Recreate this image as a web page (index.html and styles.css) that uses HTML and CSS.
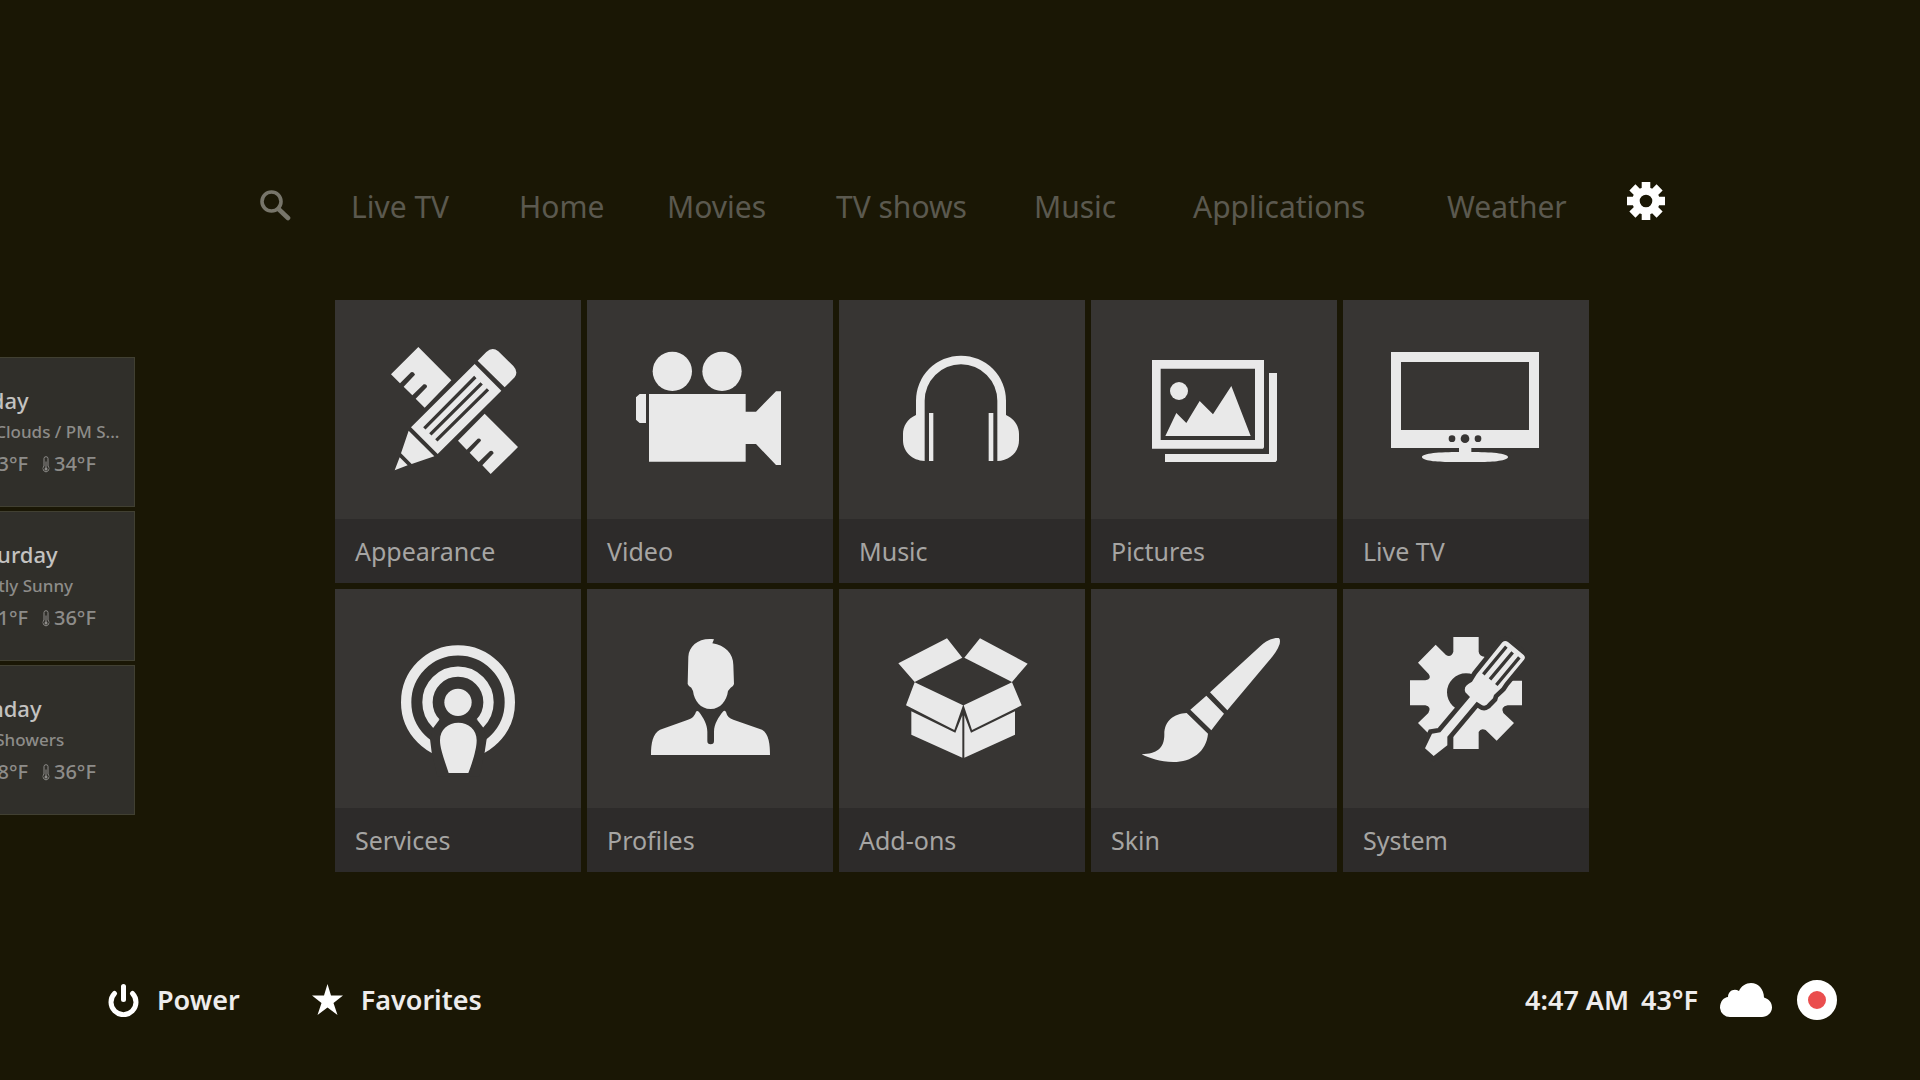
FILE: index.html
```
<!DOCTYPE html>
<html lang="en">
<head>
<meta charset="utf-8">
<title>Media center</title>
<link rel="stylesheet" href="styles.css">
</head>
<body>
<nav class="menu" aria-label="Main menu">
  <a href="#search" class="menu-search" aria-label="Search"><svg width="32" height="46" viewBox="0 0 32 46"><circle cx="12.500" cy="19.500" r="9.500" fill="none" stroke="currentColor" stroke-width="3.600"/><path d="M19.500 27l9.500 9" stroke="currentColor" stroke-width="4.600" stroke-linecap="round"/></svg></a>
  <a href="#livetv">Live TV</a>
  <a href="#home">Home</a>
  <a href="#movies">Movies</a>
  <a href="#tvshows">TV shows</a>
  <a href="#music">Music</a>
  <a href="#applications">Applications</a>
  <a href="#weather">Weather</a>
  <a href="#settings" class="menu-settings" aria-label="Settings"><svg width="38" height="38" viewBox="-19 -19 38 38" stroke="currentColor" fill="none"><circle r="10" stroke-width="7.400"/><path d="M0-19V-10M0 19V10M-19 0H-10M19 0H10M-13.600-13.600L-7-7M13.600-13.600L7-7M-13.600 13.600L-7 7M13.600 13.600L7 7" stroke-width="8.600"/></svg></a>
</nav>

<main class="main">
  <aside class="forecast" aria-label="Forecast">
    <section class="day">
      <h2>Friday</h2>
      <p class="sky">AM Clouds / PM S...</p>
      <p class="temps"><svg class="high" viewBox="0 0 7 17"><use href="#thermo"/></svg><span>43°F</span><svg class="low" viewBox="0 0 7 17"><use href="#thermo"/></svg><span>34°F</span></p>
    </section>
    <section class="day">
      <h2>Saturday</h2>
      <p class="sky">Mostly Sunny</p>
      <p class="temps"><svg class="high" viewBox="0 0 7 17"><use href="#thermo"/></svg><span>41°F</span><svg class="low" viewBox="0 0 7 17"><use href="#thermo"/></svg><span>36°F</span></p>
    </section>
    <section class="day">
      <h2>Sunday</h2>
      <p class="sky">AM Showers</p>
      <p class="temps"><svg class="high" viewBox="0 0 7 17"><use href="#thermo"/></svg><span>48°F</span><svg class="low" viewBox="0 0 7 17"><use href="#thermo"/></svg><span>36°F</span></p>
    </section>
  </aside>

  <div class="tiles">
    <a class="tile" href="#appearance">
      <svg class="art" viewBox="15 15 738 657">
        <path d="M265 156L364 256 284 338 257 311 291 276Q291 266 281 268L247 301 221 275 255 239Q252 229 243 232L210 265 183 238zM464 356L564 456 482 537 457 511 491 475Q490 465 480 468L446 501 419 473 453 437Q452 428 443 431L410 464 384 437z"/>
        <path d="M443 197L469 171Q487 154 505 169L550 213Q566 230 554 247L524 277zM434 207L514 287 323 477 243 397zM236 407L313 484 245 507 213 475zM209 487L233 511 194 526z"/>
        <path class="cut" d="M283 400L436 246M301 418L455 265M319 436L474 283" stroke-width="10"/>
      </svg>
      <span class="name">Appearance</span>
    </a>
    <a class="tile" href="#video">
      <svg class="art" viewBox="771 15 738 657">
        <circle cx="1027" cy="229" r="59"/><circle cx="1176" cy="229" r="59"/>
        <path d="M957 297H1247V350H1278L1338 289H1353V510H1338L1278 447H1247V500H957zM948 297V384H929L918 374V307L929 297z"/>
      </svg>
      <span class="name">Video</span>
    </a>
    <a class="tile" href="#music-settings">
      <svg class="art" viewBox="12 15 738 657">
        <path d="M243 360V317A135 135 0 0 1 513 317V360C540 372 552 395 552 417V436C552 470 525 497 487 498V317A109 109 0 0 0 269 317V498C231 497 204 470 204 436V417C204 395 216 372 243 360zM282 354H295V498H282zM461 354H475V498H461z"/>
      </svg>
      <span class="name">Music</span>
    </a>
    <a class="tile" href="#pictures">
      <svg class="art" viewBox="768 15 738 657">
        <path fill-rule="evenodd" d="M951 195H1287V457L1284 461H951zM977 221V435H1260V221z"/>
        <path d="M1302 234H1326V496L1322 501H990V477H1302zM991 423L1024 354 1054 384 1094 318 1134 358 1189 273 1247 423z"/>
        <circle cx="1032" cy="288" r="27"/>
      </svg>
      <span class="name">Pictures</span>
    </a>
    <a class="tile" href="#livetv-settings">
      <svg class="art" viewBox="9 15 738 657">
        <path fill-rule="evenodd" d="M153 171H597V459H394V471C450 471 504 475 504 486 504 497 460 501 420 501H330C290 501 246 497 246 486 246 475 300 471 357 471V459H153zM183 201V405H567V201z"/>
        <g class="hole"><circle cx="336" cy="431" r="10"/><circle cx="375" cy="431" r="13"/><circle cx="414" cy="431" r="10"/></g>
      </svg>
      <span class="name">Live TV</span>
    </a>
    <a class="tile" href="#services">
      <svg class="art" viewBox="15 12 738 657">
        <path class="ring" d="M384 196a155.500 155.500 0 1 1 0 311a155.500 155.500 0 1 1 0-311zM384 260a91.500 91.500 0 1 1 0 183a91.500 91.500 0 1 1 0-183z"/>
        <path class="hole" d="M300 462L305 502 322 575H448L464 502 470 462 460 428 440 403 384 370 329 403 310 428z"/>
        <circle cx="384" cy="352" r="41"/>
        <path d="M356 564C342 522 330 490 330 466C330 433 355 413 385 413C415 413 440 433 440 466C440 490 430 525 415 564z"/>
      </svg>
      <span class="name">Services</span>
    </a>
    <a class="tile" href="#profiles">
      <svg class="art" viewBox="771 12 738 657">
        <path d="M1152 163L1147 175C1185 181 1210 205 1210 240L1212 297Q1210 305 1202 308L1194 318C1190 348 1171 372 1142 372C1112 372 1093 348 1089 318L1084 308Q1075 303 1073 297L1075 215C1077 182 1108 157 1152 163zM963 510C963 475 968 446 990 434L1074 404Q1094 397 1098 380Q1102 375 1107 381C1121 400 1132 418 1132 440V468A10 10 0 0 0 1152 468V440C1152 418 1166 395 1180 379Q1184 375 1188 381Q1192 399 1210 404L1296 434C1317 446 1320 478 1320 510z"/>
      </svg>
      <span class="name">Profiles</span>
    </a>
    <a class="tile" href="#addons">
      <svg class="art" viewBox="12 12 738 657">
        <path d="M336 160L382 218 239 291 190 235zM435 160L578 236 531 291 388 218zM239 292L384 361 358 435 213 361zM531 292L386 361 411 435 560 361zM229 379L361 443 382 391V518L229 449zM540 379L408 443 388 391V518L540 449z"/>
      </svg>
      <span class="name">Add-ons</span>
    </a>
    <a class="tile" href="#skin">
      <svg class="art" viewBox="768 12 738 657">
        <path d="M1125 322L1274 185C1298 163 1319 157 1331 159Q1337 162 1334 177C1328 195 1315 212 1303 226L1177 376zM1114 332L1167 386 1129 436 1066 374zM1055 384L1119 446C1114 500 1070 531 1015 531C975 531 943 519 920 508C965 506 988 492 988 448C988 407 1017 386 1055 384z"/>
      </svg>
      <span class="name">Skin</span>
    </a>
    <a class="tile" href="#system">
      <svg class="art" viewBox="9 12 738 657">
        <path fill-rule="evenodd" d="M340 156H416V200Q418 213 433 215L450 240 500 287H546V361H503Q480 366 490 384L522 414 470 467 437 435Q422 428 416 441V492H340V441L287 467 234 414 265 384Q276 366 256 361H210V286H256Q277 282 266 267L234 233 287 179 318 210Q333 219 340 200zM378 265a57 57 0 1 0 0 114a57 57 0 1 0 0-114z"/>
        <g class="tool"><path id="driver" d="M487 172Q495 164 504 171L551 210Q558 217 552 224L495 293 485 308 462 330 459 340 447 352Q436 368 424 359L410 350 322 455V481L281 513 255 490 276 446 301 442 390 336 376 322Q370 306 385 297L396 290 410 268z"/></g>
        <use href="#driver"/>
        <path class="cut" d="M430 268L499 185M450 283L518 202M469 300L538 217" stroke-width="10"/>
      </svg>
      <span class="name">System</span>
    </a>
  </div>
</main>

<footer class="bar">
  <button type="button"><svg width="31" height="34" viewBox="0 0 31 34" fill="none" stroke="currentColor" stroke-width="5" stroke-linecap="round"><path d="M6.500 10.500A12.500 12.500 0 1 0 24.500 10.500M15.500 3.500V16.500"/></svg>Power</button>
  <button type="button"><svg width="31" height="34" viewBox="0 0 31 34" fill="currentColor"><path d="M15.500 1L19 12.500H31L21.500 20 25.500 32 15.500 24.500 5.500 32 9.500 20 0 12.500H12z"/></svg>Favorites</button>
  <div class="status">
    <span>4:47 AM</span>
    <span>43°F</span>
    <svg class="cloud" width="52" height="36" viewBox="0 0 52 36" fill="currentColor"><path d="M10 35A10 10 0 0 1 0 26C0 19 4 15.500 8 15C8 9 14 6 19 9C21 4 26 1 31 1C38 1 44 7 44 15.500C49 17 52 20.500 52 25.500C52 31 47 35 42 35z"/></svg>
    <button type="button" class="record" aria-label="Recording"></button>
  </div>
</footer>

<svg class="symbols" width="0" height="0" aria-hidden="true">
  <symbol id="thermo" viewBox="0 0 7 17"><path d="M1.500 10V2.500Q1.500.7 3.500.7T5.500 2.500V10A3.200 3.200 0 1 1 1.500 10zM3.500 5.500V12" fill="none" stroke="currentColor"/><circle cx="3.500" cy="13" r="1.500" fill="currentColor"/></symbol>
</svg>
</body>
</html>
```
FILE: styles.css
```
* { box-sizing: border-box; margin: 0; }

body {
  display: flex;
  flex-direction: column;
  min-height: 100vh;
  background: #1a1705;
  color: #eeecec;
  font-family: "Noto Sans", "Open Sans", sans-serif;
  overflow-x: hidden;
}

a { color: inherit; text-decoration: none; }
button { padding: 0; border: 0; background: none; color: inherit; font: inherit; }
svg { display: block; flex: none; }

.menu {
  display: grid;
  grid-template-columns: 92fr 168fr 148fr 169fr 198fr 159fr 254fr 180fr 38fr;
  padding: 182px 255px 0 259px;
  color: #5b594f;
  font-size: 30px;
  line-height: 50px;
  white-space: nowrap;
}
.menu-search { color: #77756a; }
.menu-settings { justify-self: end; color: #fff; }

.main {
  display: flex;
  gap: 200px;
  padding: 68px 331px 40px 0;
}

/* The forecast panel is parked mostly beyond the left edge. */
.forecast {
  display: flex;
  flex: none;
  flex-direction: column;
  align-items: flex-end;
  gap: 4px;
  width: 135px;
  padding-top: 57px;
}
.day {
  width: 340px;
  height: 150px;
  padding: 26px 0 0 168px;
  border: 1px solid #414032;
  background: #302f2a;
  color: #8d8c89;
  font-weight: 500;
  line-height: 32px;
  white-space: nowrap;
}
.day h2 { color: #c3c2c0; font-size: 22px; font-weight: 500; }
.sky { font-size: 17px; }
.temps { display: flex; align-items: center; font-size: 20px; }
.temps svg { height: 17px; margin-right: 4px; }
.high { width: 18px; }
.low { width: 8px; margin-left: 14px; }

.tiles {
  display: grid;
  flex: 1;
  grid-template-columns: repeat(5, 1fr);
  gap: 6px;
}
.tile {
  display: flex;
  flex-direction: column;
  background: #373533;
}
.art { width: 100%; fill: #e9e9e9; }
.art .hole { fill: #373533; }
.art .cut { fill: none; stroke: #373533; }
.art .ring { fill: none; stroke: #e9e9e9; stroke-width: 31px; }
.art .tool { stroke: #373533; stroke-width: 28px; }
.name {
  padding-left: 20px;
  background: #2d2b2a;
  color: #a6a5a3;
  font-size: 25px;
  line-height: 64px;
}

.bar {
  display: flex;
  align-items: center;
  gap: 72px;
  margin-top: auto;
  padding: 0 83px 60px 108px;
  font-size: 27px;
  font-weight: 600;
  line-height: 40px;
}
.bar > button { display: flex; align-items: center; gap: 18px; }
.bar svg { color: #fff; }
.status { display: flex; align-items: center; gap: 12px; margin-left: auto; }
.cloud { margin: 0 13px 0 10px; }
.record {
  width: 40px;
  height: 40px;
  border: 11px solid #fff;
  border-radius: 50%;
  background: #ea4e4e;
}
.symbols { position: absolute; }
```
